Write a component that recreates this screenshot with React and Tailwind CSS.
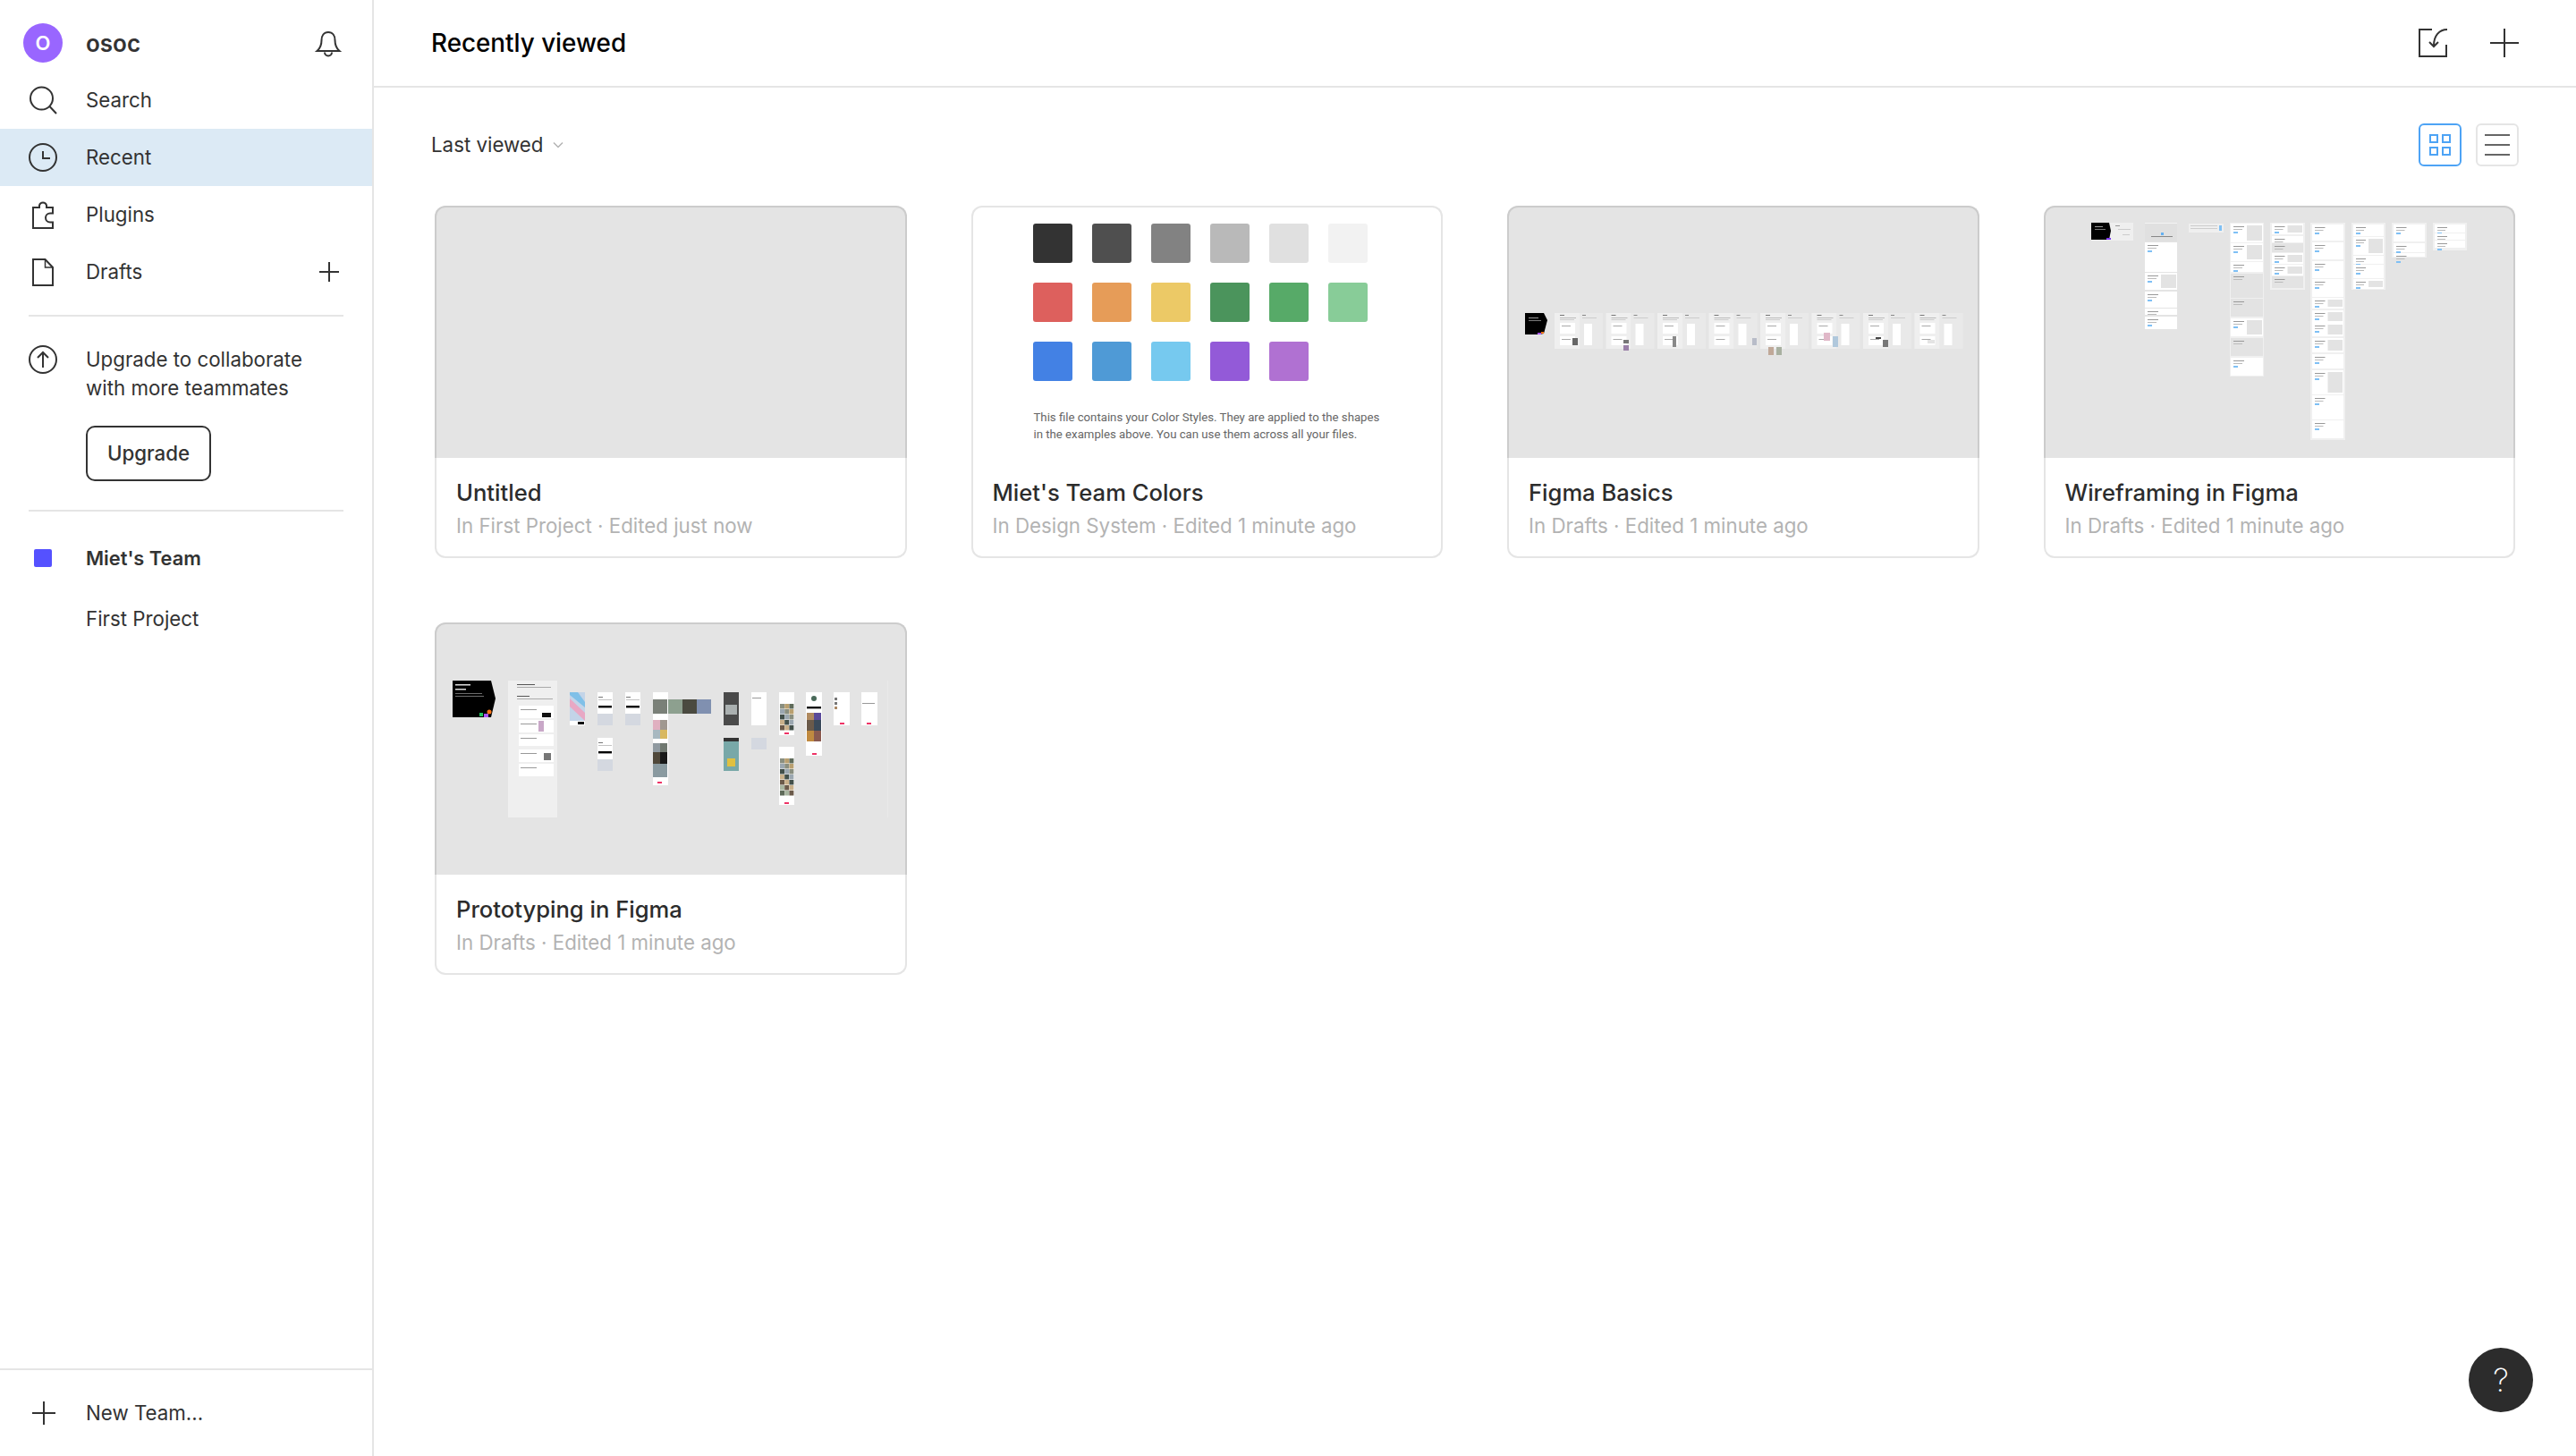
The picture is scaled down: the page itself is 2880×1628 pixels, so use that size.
const Ico = ({ children, className = '' }) => (
  <svg width="32" height="32" viewBox="0 0 32 32" fill="none" stroke="#333333" strokeWidth="2" className={`shrink-0 ${className}`}>
    {children}
  </svg>
);

const SearchIcon = () => (
  <Ico>
    <circle cx="14.5" cy="14" r="12.5" />
    <path d="M23.5 23L31 31" />
  </Ico>
);
const ClockIcon = () => (
  <Ico>
    <circle cx="16" cy="16" r="15" />
    <path d="M16 9V17H24" />
  </Ico>
);
const PuzzleIcon = () => (
  <Ico>
    <path d="M5 9H12V6.5a4.2 4.2 0 0 1 8 0V9H27V15.5H24a5 5 0 0 0 0 10H27V32H5Z" transform="translate(0 -1)" />
  </Ico>
);
const FileIcon = () => (
  <Ico>
    <path d="M5 2H18.5L27 11V31H5Z" />
    <path d="M18.5 2V11H27" strokeWidth="1.5" />
  </Ico>
);
const BellIcon = () => (
  <Ico>
    <path d="M16 4C11 4 8.5 8 8.5 13C8.5 19 7 22 3.5 25H28.5C25 22 23.5 19 23.5 13C23.5 8 21 4 16 4Z" />
    <path d="M12 26.5a4 4 0 0 0 8 0" />
  </Ico>
);
const UpIcon = () => (
  <Ico>
    <circle cx="16" cy="16" r="15" />
    <path d="M16 25V8M10 14L16 8L22 14" />
  </Ico>
);

// thin plus, same weight as the other icons
const PlusMark = ({ size = 32 }) => (
  <svg width={size} height={size} viewBox={`0 0 ${size} ${size}`} stroke="#333333" strokeWidth="2" className="shrink-0">
    <path d={`M${size / 2} 0V${size}M0 ${size / 2}H${size}`} />
  </svg>
);

function NavRow({ icon, label, active, right }) {
  return (
    <div className={`flex h-16 items-center gap-8 pl-8 pr-[37px] text-[22.3px] text-[#333333] ${active ? 'bg-[#dceaf5]' : ''}`}>
      {icon}
      <span className="flex-1">{label}</span>
      {right}
    </div>
  );
}

const swatches = [
  ['#333333', '#4f4f4f', '#828282', '#b9b9b9', '#e0e0e0', '#f2f2f2'],
  ['#dd605d', '#e69c58', '#ecc966', '#4b945c', '#57aa68', '#88cc98'],
  ['#4381e4', '#4f9ad6', '#76c9ef', '#935ad8', '#b071d2'],
];

function ColorsThumb() {
  return (
    <div className="flex h-full flex-col pl-[67px] pt-[18px]">
      <div className="flex flex-col gap-[22px]">
        {swatches.map((row, i) => (
          <div key={i} className="flex gap-[22px]">
            {row.map((c) => (
              <div key={c} className="h-[44px] w-[44px] rounded-[3px]" style={{ backgroundColor: c }} />
            ))}
          </div>
        ))}
      </div>
      <p className="ml-[1px] mt-[31px] font-['Roboto',sans-serif] text-[13.2px] leading-[19px] text-[#666666]">
        This file contains your Color Styles. They are applied to the shapes
        <br />
        in the examples above. You can use them across all your files.
      </p>
    </div>
  );
}

// Rects: [x, y, w, h, fill]
const Rects = ({ items }) =>
  items.map(([x, y, w, h, f], i) => <rect key={i} x={x} y={y} width={w} height={h} fill={f} />);

const basicsGroups = [53, 110.5, 168, 225.5, 283, 340.5, 398, 455.5];

function BasicsThumb() {
  const accents = [
    [[73, 148, 6, 8, '#666']],
    [[130, 150, 6, 4, '#777'], [130, 156, 6, 6, '#9a80a8']],
    [[185, 146, 4, 12, '#888']],
    [[274, 148, 5, 8, '#b8bcc8']],
    [[292, 158, 6, 9, '#c0a898'], [301, 158, 6, 9, '#a8b0a0']],
    [[354, 142, 7, 9, '#e0b8c8'], [364, 146, 6, 12, '#b0c8dc']],
    [[412, 147, 6, 2, '#444'], [420, 150, 6, 8, '#777']],
    [[470, 150, 8, 4, '#e4e4e4']],
  ];
  return (
    <svg width="524" height="280" viewBox="0 0 524 280" className="-ml-[2px] -mt-[2px] block blur-[0.4px]">
      <path d="M20 120H41L45 128L41 143L36 144H20Z" fill="#000" />
      <rect x="34" y="142" width="4" height="2" fill="#a855f7" />
      <rect x="38" y="141" width="3" height="2" fill="#f97316" />
      <rect x="24" y="125" width="11" height="1" fill="#999" />
      <rect x="24" y="128" width="14" height="1" fill="#777" />
      {basicsGroups.map((x, i) => (
        <g key={x}>
          <rect x={x} y="120" width="28" height="40" fill="#efefef" />
          <rect x={x + 28} y="120" width="26" height="40" fill="#e9e9e9" />
          <rect x={x + 6} y="131" width="17" height="12" fill="#ffffff" />
          <rect x={x + 6} y="146" width="17" height="10" fill="#ffffff" />
          <rect x={x + 6} y="122" width="5" height="1" fill="#777" />
          <rect x={x + 6} y="125" width="18" height="1" fill="#bbb" />
          <rect x={x + 6} y="127" width="16" height="1" fill="#ccc" />
          <rect x={x + 31} y="122" width="4" height="1" fill="#888" />
          <rect x={x + 31} y="125" width="16" height="1" fill="#ccc" />
          <rect x={x + 33} y="132" width="9" height="24" fill="#ffffff" />
          <rect x={x + 8} y="134" width="10" height="1" fill="#aaa" />
          <rect x={x + 8} y="149" width="10" height="1" fill="#aaa" />
          <Rects items={accents[i]} />
        </g>
      ))}
    </svg>
  );
}

function WireStack({ x, y, w, blocks }) {
  // white sections on a pale strip, each with a few grey text lines or a grey image
  return blocks.map(([by, bh, kind], i) => (
    <g key={i}>
      <rect x={x} y={y + by} width={w} height={bh} fill="#ffffff" />
      {kind === 'img' && <rect x={x + w / 2} y={y + by + 2} width={w / 2 - 1} height={bh - 4} fill="#e3e3e3" />}
      {kind === 'full' && <rect x={x} y={y + by} width={w} height={bh} fill="#e3e3e3" />}
      <rect x={x + 3} y={y + by + 3} width={w / 2 - 6} height="1" fill="#999" />
      <rect x={x + 3} y={y + by + 6} width={w / 2 - 8} height="1" fill="#bbb" />
      {kind !== 'full' && <rect x={x + 3} y={y + by + 9} width="5" height="2" fill="#7fc0f5" />}
    </g>
  ));
}

function WireframeThumb() {
  return (
    <svg width="524" height="280" viewBox="0 0 524 280" className="-ml-[2px] -mt-[2px] block blur-[0.4px]">
      <rect x="53" y="19" width="47" height="20" fill="#efefef" />
      <path d="M53 19H73L75 28L73 38H53Z" fill="#000" />
      <rect x="70" y="36" width="5" height="2" fill="#7c3aed" />
      <rect x="57" y="23" width="9" height="1" fill="#999" />
      <rect x="57" y="26" width="12" height="1" fill="#777" />
      <rect x="80" y="22" width="5" height="1" fill="#999" />
      <rect x="83" y="26" width="14" height="1" fill="#ccc" />
      <rect x="88" y="32" width="8" height="1" fill="#ccc" />

      <rect x="113" y="19" width="36" height="21" fill="#e0e0e0" />
      <rect x="131" y="30" width="3" height="3" fill="#64b0f0" />
      <rect x="120" y="34" width="24" height="1" fill="#888" />
      <rect x="113" y="19" width="36" height="1" fill="#f4f4f4" />
      <WireStack x={113} y={19} w={36} blocks={[[22, 33, ''], [56, 19, 'img'], [77, 18, ''], [96, 7, ''], [105, 14, '']]} />

      <rect x="162" y="20" width="39" height="10" fill="#efefef" />
      <rect x="164" y="22" width="30" height="1" fill="#ccc" />
      <rect x="164" y="25" width="30" height="1" fill="#ccc" />
      <rect x="196" y="22" width="3" height="6" fill="#7fc0f5" />

      <rect x="208" y="19" width="38" height="172" fill="#f0f0f0" />
      <WireStack x={209} y={20} w={36} blocks={[[0, 21, 'img'], [22, 20, 'img'], [43, 11, ''], [56, 27, 'full'], [84, 20, 'full'], [106, 20, 'img'], [128, 20, 'full'], [150, 20, '']]} />

      <rect x="253" y="19" width="39" height="75" fill="#f0f0f0" />
      <WireStack x={255} y={20} w={35} blocks={[[0, 12, 'img'], [14, 7, ''], [22, 10, 'full'], [33, 12, 'img'], [46, 12, 'img'], [59, 13, 'full']]} />

      <rect x="298" y="19" width="39" height="243" fill="#f0f0f0" />
      <WireStack
        x={300}
        y={20}
        w={35}
        blocks={[[1, 18, ''], [21, 19, ''], [42, 19, ''], [62, 20, ''], [83, 12, 'img'], [97, 14, 'img'], [111, 15, 'img'], [128, 16, 'img'], [146, 16, ''], [164, 27, 'img'], [192, 27, ''], [220, 20, '']]}
      />

      <rect x="344" y="19" width="38" height="75" fill="#f0f0f0" />
      <WireStack x={346} y={20} w={34} blocks={[[1, 13, ''], [15, 20, 'img'], [36, 9, ''], [46, 15, ''], [62, 11, 'img']]} />

      <rect x="389" y="19" width="39" height="39" fill="#f0f0f0" />
      <WireStack x={391} y={20} w={35} blocks={[[1, 19, ''], [22, 10, ''], [33, 4, '']]} />

      <rect x="435" y="19" width="38" height="31" fill="#f0f0f0" />
      <WireStack x={437} y={20} w={34} blocks={[[1, 9, ''], [11, 7, ''], [19, 8, '']]} />
    </svg>
  );
}

const photoColors = ['#8a8f80', '#c9b08a', '#5f6b5a', '#9ba7b0', '#6b5a4a', '#b9a070', '#43504a', '#a8b5a0'];

function PhotoGrid({ x, y, rows }) {
  const cells = [];
  for (let r = 0; r < rows; r++) {
    for (let c = 0; c < 3; c++) {
      cells.push(
        <rect key={`${r}-${c}`} x={x + 1 + c * 5.2} y={y + r * 6} width="5" height="5.5" fill={photoColors[(r * 3 + c * 5) % 8]} />,
      );
    }
  }
  return <g>{cells}</g>;
}

function Phone({ x, y, h = 37, kb }) {
  return (
    <g>
      <rect x={x} y={y} width="17" height={h} fill="#ffffff" />
      <rect x={x + 1} y={y + 5} width="5" height="1" fill="#777" />
      <rect x={x + 1} y={y + 8} width="15" height="0.6" fill="#999" />
      <rect x={x + 1} y={y + 15} width="15" height="2.4" fill="#000" />
      {kb && <rect x={x} y={y + h - 13} width="17" height="13" fill="#d4d8e0" />}
    </g>
  );
}

function ProtoThumb() {
  return (
    <svg width="524" height="284" viewBox="0 0 524 284" className="-ml-[2px] -mt-[5px] block blur-[0.4px]">
      <path d="M20 68H63L68 88L63 109H20Z" fill="#000" />
      <rect x="23" y="72" width="17" height="1.5" fill="#ddd" />
      <rect x="23" y="77" width="12" height="1.5" fill="#ddd" />
      <rect x="23" y="82" width="30" height="0.8" fill="#888" />
      <rect x="23" y="85" width="32" height="0.8" fill="#888" />
      <rect x="50" y="104" width="4" height="4" fill="#22c55e" />
      <rect x="55" y="105" width="5" height="4" fill="#a855f7" />
      <circle cx="61" cy="103" r="2.5" fill="#f97316" />

      <rect x="82" y="68" width="55" height="153" fill="#efefef" />
      <rect x="92" y="72" width="20" height="1" fill="#555" />
      <rect x="92" y="75" width="38" height="1" fill="#aaa" />
      <rect x="92" y="85" width="14" height="1" fill="#555" />
      <rect x="92" y="88" width="40" height="1" fill="#aaa" />
      <rect x="94" y="96" width="39" height="14" fill="#fff" />
      <rect x="94" y="112" width="39" height="14" fill="#fff" />
      <rect x="94" y="128" width="39" height="13" fill="#fff" />
      <rect x="94" y="145" width="39" height="14" fill="#fff" />
      <rect x="94" y="161" width="39" height="14" fill="#fff" />
      <rect x="96" y="100" width="18" height="1" fill="#999" />
      <rect x="96" y="116" width="18" height="1" fill="#999" />
      <rect x="96" y="132" width="18" height="1" fill="#999" />
      <rect x="96" y="149" width="18" height="1" fill="#999" />
      <rect x="96" y="165" width="18" height="1" fill="#999" />
      <rect x="120" y="104" width="10" height="5" fill="#111" />
      <rect x="116" y="113" width="6" height="12" fill="#c9a8c8" />
      <rect x="122" y="149" width="8" height="8" fill="#777" />

      <rect x="151" y="81" width="17" height="37" fill="#c3d4e8" />
      <path d="M151 88L168 104V113L151 97Z" fill="#e8a8c4" />
      <path d="M151 81H160L168 92V98L151 84Z" fill="#7fc0e8" />
      <rect x="151" y="113" width="17" height="5" fill="#fff" />
      <rect x="160" y="114" width="7" height="3" fill="#111" />

      <Phone x={182} y={81} kb />
      <Phone x={213} y={81} kb />
      <Phone x={182} y={132} kb />

      <rect x="244" y="81" width="17" height="104" fill="#fff" />
      <rect x="244" y="89" width="16" height="16" fill="#7a8078" />
      <rect x="261" y="89" width="16" height="16" fill="#8da08f" />
      <rect x="277" y="89" width="16" height="16" fill="#4a4a40" />
      <rect x="293" y="89" width="16" height="16" fill="#8090b0" />
      <rect x="244" y="112" width="8" height="11" fill="#e0b0c0" />
      <rect x="252" y="112" width="8" height="11" fill="#a09890" />
      <rect x="244" y="123" width="8" height="10" fill="#a8b8c0" />
      <rect x="252" y="123" width="8" height="10" fill="#d8b860" />
      <rect x="244" y="138" width="8" height="10" fill="#909aa0" />
      <rect x="252" y="138" width="8" height="10" fill="#707870" />
      <rect x="244" y="148" width="8" height="13" fill="#50483a" />
      <rect x="252" y="148" width="8" height="13" fill="#181818" />
      <rect x="244" y="161" width="16" height="15" fill="#8a9aa0" />
      <rect x="249" y="181" width="5" height="2" fill="#ee3366" />

      <rect x="323" y="81" width="17" height="37" fill="#4a4a4a" />
      <rect x="325" y="95" width="13" height="11" fill="#aab0b0" />
      <rect x="323" y="132" width="17" height="37" fill="#78a8a8" />
      <rect x="323" y="132" width="17" height="4" fill="#333" />
      <rect x="327" y="155" width="9" height="9" fill="#e0c040" />

      <rect x="354" y="81" width="17" height="37" fill="#fff" />
      <rect x="355" y="87" width="10" height="1" fill="#999" />
      <rect x="354" y="132" width="17" height="13" fill="#d4d8e0" />

      <rect x="385" y="81" width="17" height="48" fill="#fff" />
      <PhotoGrid x={385} y={94} rows={5} />
      <rect x="391" y="126" width="5" height="2" fill="#ee3366" />
      <rect x="385" y="142" width="17" height="65" fill="#fff" />
      <PhotoGrid x={385} y={155} rows={7} />
      <rect x="391" y="204" width="5" height="2" fill="#ee3366" />

      <rect x="415" y="81" width="18" height="71" fill="#fff" />
      <circle cx="424" cy="88" r="3" fill="#4a6a5a" />
      <rect x="416" y="97" width="16" height="2.4" fill="#111" />
      <rect x="416" y="104" width="8" height="8" fill="#b08a60" />
      <rect x="424" y="104" width="8" height="8" fill="#5a4a9a" />
      <rect x="416" y="112" width="8" height="12" fill="#6a5a4a" />
      <rect x="424" y="112" width="8" height="12" fill="#3a4a5a" />
      <rect x="416" y="124" width="8" height="12" fill="#c08a40" />
      <rect x="424" y="124" width="8" height="12" fill="#8a5a50" />
      <rect x="422" y="149" width="5" height="2" fill="#ee3366" />

      <rect x="446" y="81" width="18" height="37" fill="#fff" />
      <rect x="447" y="87" width="3" height="3" fill="#777" />
      <rect x="447" y="92" width="3" height="3" fill="#777" />
      <rect x="447" y="97" width="3" height="3" fill="#a86" />
      <rect x="453" y="115" width="5" height="2" fill="#ee3366" />

      <rect x="477" y="81" width="18" height="37" fill="#fff" />
      <rect x="478" y="93" width="14" height="1" fill="#999" />
      <rect x="483" y="115" width="5" height="2" fill="#ee3366" />
      <rect x="506" y="68" width="1" height="153" fill="#e9e9e9" />
    </svg>
  );
}

const files = [
  { name: 'Untitled', meta: 'In First Project · Edited just now', thumb: null },
  { name: "Miet's Team Colors", meta: 'In Design System · Edited 1 minute ago', thumb: <ColorsThumb />, light: true },
  { name: 'Figma Basics', meta: 'In Drafts · Edited 1 minute ago', thumb: <BasicsThumb /> },
  { name: 'Wireframing in Figma', meta: 'In Drafts · Edited 1 minute ago', thumb: <WireframeThumb /> },
  { name: 'Prototyping in Figma', meta: 'In Drafts · Edited 1 minute ago', thumb: <ProtoThumb /> },
];

function FileCard({ file }) {
  return (
    <div className="h-[394px]">
      <div
        className={`h-[282px] overflow-hidden rounded-t-[12px] border-x-2 border-t-2 ${file.light ? 'border-[#e5e5e5] bg-white' : 'border-[#cccccc] bg-[#e4e4e4]'}`}
      >
        {file.thumb}
      </div>
      <div className="h-[112px] rounded-b-[12px] border-x-2 border-b-2 border-[#e5e5e5] pl-[22px] pt-[22px]">
        <div className="text-[25.6px] leading-[34px] font-medium text-[#2c2c2c]">{file.name}</div>
        <div className="mt-[5px] text-[22.3px] leading-[30px] text-[#b3b3b3]">{file.meta}</div>
      </div>
    </div>
  );
}

export default function App() {
  return (
    <div className="relative flex h-[1628px] w-[2880px] overflow-hidden bg-white font-['Inter',sans-serif]">
      <aside className="flex h-full w-[418px] shrink-0 flex-col border-r-2 border-[#e5e5e5]">
        <div className="flex h-20 items-start pl-[26px] pr-[33px] pt-[26px]">
          <div className="flex h-11 w-11 items-center justify-center rounded-full bg-[#9966ff] text-[22px] font-semibold text-white">
            O
          </div>
          <div className="ml-[26px] flex-1 pt-[1px] text-[26px] leading-[44px] font-semibold text-[#333333]">osoc</div>
          <div className="pt-[6px]">
            <BellIcon />
          </div>
        </div>

        <NavRow icon={<SearchIcon />} label="Search" />
        <NavRow icon={<ClockIcon />} label="Recent" active />
        <NavRow icon={<PuzzleIcon />} label="Plugins" />
        <NavRow icon={<FileIcon />} label="Drafts" right={<PlusMark size={22} />} />

        <div className="mx-8 mt-4 h-[2px] bg-[#e5e5e5]" />

        <div className="flex gap-8 pl-8 pt-[32px]">
          <UpIcon />
          <div>
            <p className="text-[22.3px] leading-[32px] text-[#333333]">
              Upgrade to collaborate
              <br />
              with more teammates
            </p>
            <button className="mt-[26px] flex h-[62px] w-[140px] items-center justify-center rounded-[10px] border-2 border-[#333333] text-[22.3px] font-medium text-[#333333]">
              Upgrade
            </button>
          </div>
        </div>

        <div className="mx-8 mt-[32px] h-[2px] bg-[#e5e5e5]" />

        <div className="mt-[36px] flex h-8 items-center gap-[38px] pl-[38px] text-[21.8px] font-semibold text-[#333333]">
          <div className="h-5 w-5 rounded-[2px] bg-[#5551ff]" />
          <span>Miet's Team</span>
        </div>
        <div className="mt-[36px] pl-24 text-[22.3px] leading-8 text-[#333333]">First Project</div>

        <div className="mt-auto flex h-[98px] items-center gap-[34px] border-t-2 border-[#e5e5e5] pl-9 text-[22.3px] text-[#333333]">
          <PlusMark size={26} />
          <span>New Team...</span>
        </div>
      </aside>

      <main className="min-w-0 flex-1">
        <header className="flex h-[98px] items-center border-b-2 border-[#e5e5e5] pl-[64px] pr-16">
          <h1 className="flex-1 pt-[2px] text-[27.8px] font-medium text-black">Recently viewed</h1>
          <svg width="32" height="32" viewBox="0 0 32 32" fill="none" stroke="#333333" strokeWidth="2" className="shrink-0">
            <path d="M15 1H1V31H31V18" />
            <path d="M32 1C23 1 17 8 17 19" />
            <path d="M12 15L17 20L22 15" />
          </svg>
          <div className="ml-12">
            <PlusMark size={32} />
          </div>
        </header>

        <div className="flex h-[132px] items-start justify-between pl-[64px] pr-16">
          <div className="mt-[48px] flex h-8 items-center gap-[10px] text-[22.3px] text-[#333333]">
            Last viewed
            <svg width="12" height="8" viewBox="0 0 12 8" fill="none" stroke="#b3b3b3" strokeWidth="1.5">
              <path d="M1 1.5L6 6.5L11 1.5" />
            </svg>
          </div>
          <div className="mt-10 flex gap-4">
            <div className="flex h-12 w-12 items-center justify-center rounded-[6px] border-2 border-[#4da3f5]">
              <div className="grid grid-cols-2 gap-1">
                <div className="h-[10px] w-[10px] border-2 border-[#4da3f5]" />
                <div className="h-[10px] w-[10px] border-2 border-[#4da3f5]" />
                <div className="h-[10px] w-[10px] border-2 border-[#4da3f5]" />
                <div className="h-[10px] w-[10px] border-2 border-[#4da3f5]" />
              </div>
            </div>
            <div className="flex h-12 w-12 flex-col items-center justify-center gap-[9px] rounded-[6px] border-2 border-[#e5e5e5]">
              <div className="h-[2px] w-7 bg-[#666666]" />
              <div className="h-[2px] w-7 bg-[#666666]" />
              <div className="h-[2px] w-7 bg-[#666666]" />
            </div>
          </div>
        </div>

        <div className="ml-[68px] grid w-[2326px] grid-cols-4 gap-[72px]">
          {files.map((f) => (
            <FileCard key={f.name} file={f} />
          ))}
        </div>
      </main>

      <button className="absolute bottom-[49px] right-[48px] flex h-[72px] w-[72px] items-center justify-center rounded-full bg-[#2c2c2c] text-[36px] font-extralight text-white">
        ?
      </button>
    </div>
  );
}
